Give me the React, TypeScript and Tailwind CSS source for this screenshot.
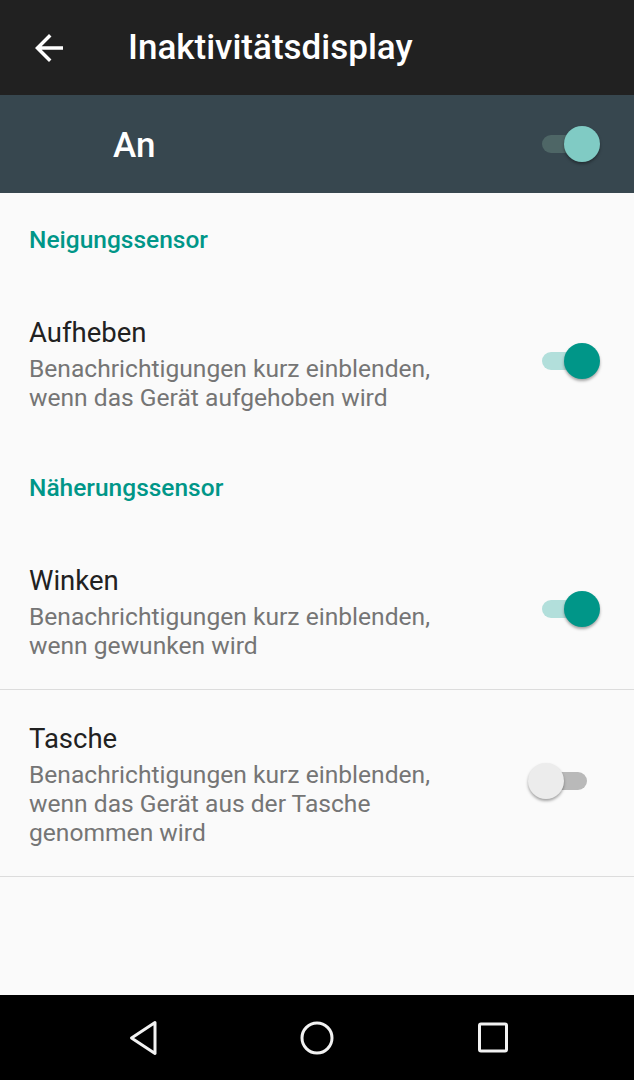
import React from "react";

type SwitchProps = { on: boolean; dark?: boolean };

const Toggle = ({ on, dark }: SwitchProps) => {
  const track = dark ? "bg-[#4e6666]" : on ? "bg-[#b2dfdb]" : "bg-[#b9b9b9]";
  const thumb = dark ? "bg-[#80cbc4]" : on ? "bg-[#009688]" : "bg-[#ececec]";
  return (
    <div className="relative h-[36px] w-[72px] shrink-0">
      <div className={`absolute left-[14px] top-[9px] h-[18px] w-[45px] rounded-full ${track}`} />
      <div
        className={`absolute top-0 h-[36px] w-[36px] rounded-full shadow-[0_2px_3px_rgba(0,0,0,0.35)] ${thumb} ${
          on ? "right-0" : "left-0"
        }`}
      />
    </div>
  );
};

const SectionHeader = ({ label }: { label: string }) => (
  <div className="px-[29px] pb-[30px] pt-[33px]">
    <p className="text-[24.5px] font-medium leading-[28px] text-[#009688]">{label}</p>
  </div>
);

const SettingRow = ({
  title,
  summary,
  on,
  divider,
}: {
  title: string;
  summary: string;
  on: boolean;
  divider?: boolean;
}) => (
  <div className={`flex items-center pb-[29px] pl-[29px] pr-[34px] pt-[32px] ${divider ? "border-b border-[#dcdcdc]" : ""}`}>
    <div className="w-[440px]">
      <p className="text-[27.5px] leading-[34px] text-[#212121]">{title}</p>
      <p className="mt-1 text-[24.6px] leading-[29px] text-[#757575]">{summary}</p>
    </div>
    <div className="mb-[7px] ml-auto">
      <Toggle on={on} />
    </div>
  </div>
);

export default function App() {
  return (
    <div
      className="flex h-[1080px] w-[634px] flex-col bg-[#fafafa]"
      style={{ fontFamily: "Roboto, 'Noto Sans', sans-serif" }}
    >
      <header className="flex h-[95px] shrink-0 items-center bg-[#212121]">
        <svg className="ml-[28px]" width="42" height="42" viewBox="0 0 24 24" fill="#ffffff">
          <path d="M20 11H7.83l5.59-5.59L12 4l-8 8 8 8 1.41-1.41L7.83 13H20v-2z" />
        </svg>
        <h1 className="ml-[58px] text-[35px] font-medium leading-[40px] text-white">Inaktivitätsdisplay</h1>
      </header>

      <div className="flex h-[98px] shrink-0 items-center bg-[#37474f] pl-[113px] pr-[34px]">
        <span className="pt-[3px] text-[35px] font-medium leading-[40px] text-white">An</span>
        <div className="ml-auto">
          <Toggle on dark />
        </div>
      </div>

      <div className="flex-1">
        <SectionHeader label="Neigungssensor" />
        <SettingRow
          title="Aufheben"
          summary="Benachrichtigungen kurz einblenden, wenn das Gerät aufgehoben wird"
          on
        />
        <SectionHeader label="Näherungssensor" />
        <SettingRow
          title="Winken"
          summary="Benachrichtigungen kurz einblenden, wenn gewunken wird"
          on
          divider
        />
        <SettingRow
          title="Tasche"
          summary="Benachrichtigungen kurz einblenden, wenn das Gerät aus der Tasche genommen wird"
          on={false}
          divider
        />
      </div>

      <nav className="flex h-[85px] shrink-0 items-center justify-center gap-[128px] bg-black">
        <svg width="48" height="48" viewBox="0 0 48 48" fill="none" stroke="#f2f2f2" strokeWidth="3" strokeLinejoin="round">
          <path d="M38 8.5 L14.5 24 L38 39.5 Z" />
        </svg>
        <svg width="48" height="48" viewBox="0 0 48 48" fill="none" stroke="#f2f2f2" strokeWidth="3">
          <circle cx="24" cy="24" r="15" />
        </svg>
        <svg width="48" height="48" viewBox="0 0 48 48" fill="none" stroke="#f2f2f2" strokeWidth="3" strokeLinejoin="round">
          <rect x="10.5" y="10" width="27" height="27" rx="1.5" />
        </svg>
      </nav>
    </div>
  );
}
